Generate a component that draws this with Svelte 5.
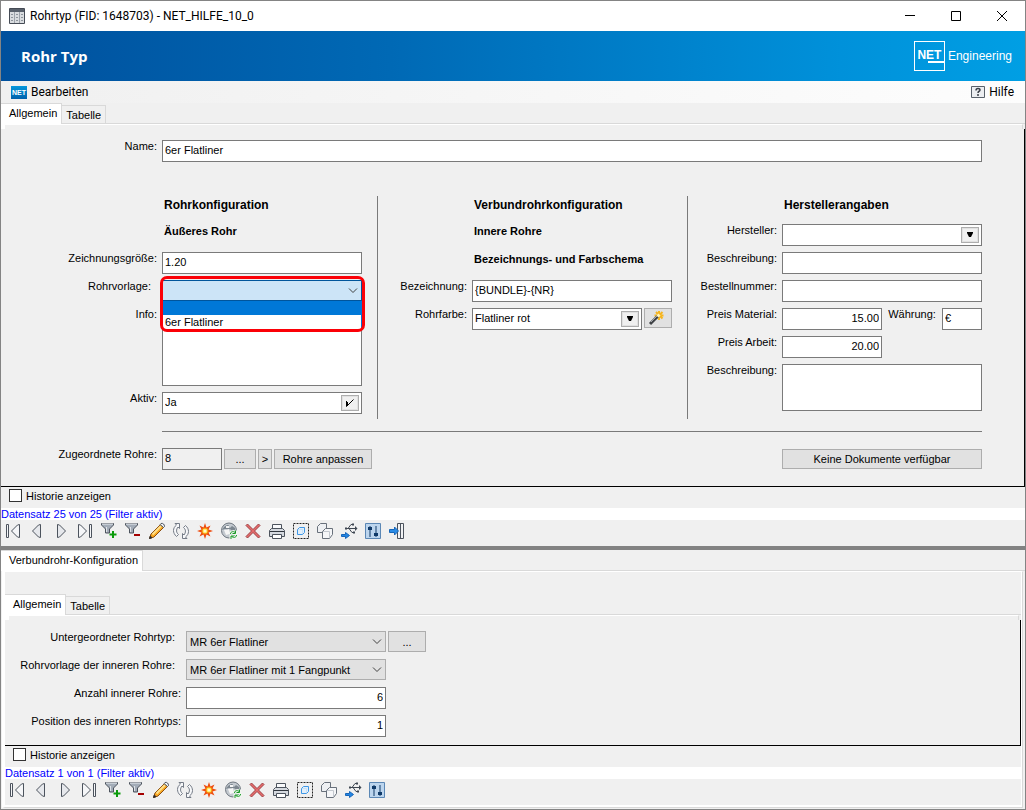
<script>
	const tools = [
		{ id: 'first', label: 'Erster Datensatz' },
		{ id: 'prev', label: 'Vorheriger Datensatz' },
		{ id: 'next', label: 'Nächster Datensatz' },
		{ id: 'last', label: 'Letzter Datensatz' },
		{ id: 'filter-add', label: 'Filter setzen' },
		{ id: 'filter-remove', label: 'Filter entfernen' },
		{ id: 'edit', label: 'Bearbeiten' },
		{ id: 'refresh', label: 'Aktualisieren' },
		{ id: 'new', label: 'Neu' },
		{ id: 'globe', label: 'Karte aktualisieren' },
		{ id: 'delete', label: 'Löschen' },
		{ id: 'print', label: 'Drucken' },
		{ id: 'select', label: 'Auswählen' },
		{ id: 'copy', label: 'Kopieren' },
		{ id: 'relation', label: 'Beziehung' },
		{ id: 'settings', label: 'Einstellungen' },
		{ id: 'exit', label: 'Schließen' }
	];

	let form = {
		name: '6er Flatliner',
		size: '1.20',
		active: 'Ja',
		count: '8',
		pattern: '{BUNDLE}-{NR}',
		color: 'Flatliner rot',
		material: '15.00',
		work: '20.00',
		currency: '€'
	};
	let inner = { count: '6', position: '1' };
</script>

<svelte:head>
	<title>Rohrtyp (FID: 1648703) - NET_HILFE_10_0</title>
</svelte:head>

{#snippet icon(name)}
	<svg width="18" height="18" viewBox="0 0 18 18" fill="none" stroke="#4c535d" aria-hidden="true">
		{#if name === 'first'}
			<path d="M2.5 2.5h2v13h-2zM15.5 2.5v13l-2 -.5l-6 -6l6 -6z" fill="#f5f6f8" />
		{:else if name === 'prev'}
			<path d="M12.5 2.5v13l-2 -.5l-6 -6l6 -6z" fill="#e6e8ec" />
		{:else if name === 'next'}
			<path d="M5.5 2.5v13l2 -.5l6 -6l-6 -6z" fill="#e6e8ec" />
		{:else if name === 'last'}
			<path d="M13.5 2.5h2v13h-2zM2.5 2.5v13l2 -.5l6 -6l-6 -6z" fill="#f5f6f8" />
		{:else if name === 'filter-add' || name === 'filter-remove'}
			<path d="M1.500 1.500h12v1.500l-4 4v4h-4v-4l-4 -4z" fill="#a3acb8" />
			<path d="M2 2h11" stroke="#e8ebef" />
			<path d="M6.500 5v5" stroke="#dfe3e8" />
			{#if name === 'filter-add'}
				<path d="M13 9v7M9.500 12.500h7" stroke="#0a9a0a" stroke-width="2" />
			{:else}
				<path d="M10 13h6" stroke="#a40000" stroke-width="2" />
			{/if}
		{:else if name === 'edit'}
			<path d="M1.500 16.500l1.500 -4.500l9.500 -9.500l3 3l-9.500 9.500z" fill="#f9a823" stroke="#8a4d12" />
			<path d="M4.500 12.500l8.500 -8.500" stroke="#ffe08a" stroke-width="2" />
			<path d="M12 2.500l1 -1q1.500 -.5 2.500 .5t1 2.500l-1 1z" fill="#eef1f5" />
			<path d="M1.500 16.500l.8 -2.500l1.700 1.700z" fill="#222" stroke="#333" />
		{:else if name === 'refresh'}
			<path
				d="M7.500 1.500h-4.500l1.500 1.500c-4 3 -4 8 0 11.500l2 -2c-2.500 -2 -2.500 -5 -.5 -7.500l1.500 1.500z"
				fill="#f6f7f9"
				stroke="#747b86"
			/>
			<path
				d="M10.500 16.500h4.500l-1.500 -1.500c4 -3 4 -8 0 -11.500l-2 2c2.500 2 2.500 5 .5 7.500l-1.500 -1.500z"
				fill="#f6f7f9"
				stroke="#747b86"
			/>
		{:else if name === 'new'}
			<path d="M9 1l1.500 4.500l4 -2l-2 4l4.500 1.500l-4.500 1.500l2 4l-4 -2l-1.500 4.500l-1.500 -4.500l-4 2l2 -4l-4.500 -1.500l4.500 -1.500l-2 -4l4 2z" fill="#ee4a0c" stroke="none" />
			<circle cx="9" cy="9" r="3" fill="#ffe24a" stroke="#f58a0b" />
			<circle cx="9" cy="9" r="1.500" fill="#fffbd0" stroke="none" />
		{:else if name === 'globe'}
			<circle cx="9" cy="8.500" r="7.500" fill="#c3c9cf" stroke="#6f7780" />
			<path d="M4 5l3 -2h2l-1 2l2 1l2 -2l3 2v3h-3l-2 -2l-2 1l-3 -1l-3 1z" fill="#7c868f" stroke="none" />
			<path d="M4 8l5 -1l1 5l-4 1zM6 4h3v2h-3z" fill="#f5f5f5" stroke="none" />
			<path d="M10.500 12c0 -3 4 -3 5 -1M15.500 8.500v3h-3M16.500 13c0 3 -4 3 -5 1M11 17v-3h3" stroke="#f0f8ef" stroke-width="3" />
			<path d="M10.500 12c0 -3 4 -3 5 -1M15.500 8.500v3h-3M16.500 13c0 3 -4 3 -5 1M11 17v-3h3" stroke="#169623" />
		{:else if name === 'delete'}
			<path
				d="M2 3.500l1.500 -1.500l5.500 5.500l5.500 -5.500l1.500 1.500l-5.500 5.500l5.500 5.500l-1.500 1.500l-5.500 -5.500l-5.500 5.500l-1.500 -1.500l5.500 -5.500z"
				fill="#e66a6a"
				stroke="#9c4145"
			/>
		{:else if name === 'print'}
			<path d="M4.500 7.500v-5h9v5" fill="#f8f9fb" />
			<path d="M3.500 6.500h11l2 2v6h-15v-6z" fill="#d5d9df" />
			<path d="M4.500 12.500h9v4h-9z" fill="#fff" />
			<path d="M2 9.500h14" stroke="#30363e" />
		{:else if name === 'select'}
			<path d="M1.500 1.500h15v15h-15z" stroke="#222" stroke-dasharray="2 1" />
			<path d="M5.500 7.500l2 -2h5v5l-2 2h-5z" fill="#e2effa" stroke="#3e97e6" />
			<path d="M6 7.500h4.500v4.500" stroke="#c5e0f8" />
		{:else if name === 'copy'}
			<path d="M1.500 4.500l3 -3h6v6l-3 3h-6z" fill="#eef0f3" stroke="#68707b" />
			<path d="M6.500 9.500l3 -3h7v6l-3 4h-7z" fill="#f5f6f8" stroke="#68707b" />
			<path d="M7 9.500h6.500v6.500" stroke="#c3c8cf" />
		{:else if name === 'relation'}
			<path d="M6 6.500h10M8 6.500l3 -4h2M9 6.500l3 4h2" stroke="#3f4752" />
			<path d="M12 1.500h2v2h-2zM13 9.500h2v2h-2zM5 5.500h2v2h-2z" fill="#3f4752" stroke="none" />
			<path d="M15 4l2.500 2.500l-2.500 2.500z" fill="#3f4752" stroke="none" />
			<path d="M1.500 12.500h4v-2l4 3l-4 3v-2h-4z" fill="#2386e4" stroke="#1866b8" />
		{:else if name === 'settings'}
			<path d="M1.500 1.500h15v15h-15z" fill="#bcd5ee" stroke="#5b87b5" />
			<path d="M6 4v11M12 4v11" stroke="#103a69" />
			<path d="M4 5h4v3h-4zM10 11h4v3h-4z" fill="#103a69" stroke="none" />
		{:else if name === 'exit'}
			<path d="M9.500 1.500h6v15h-6zM12.500 1.500v15" fill="#f1f2f4" />
			<path d="M1.500 7.500h5v-2.500l4 4l-4 4v-2.500h-5z" fill="#2b8ce6" stroke="#1866b8" />
		{/if}
	</svg>
{/snippet}

{#snippet toolbar(items)}
	<div class="toolbar" role="toolbar">
		{#each items as tool}
			<button type="button" aria-label={tool.label}>{@render icon(tool.id)}</button>
		{/each}
	</div>
{/snippet}

{#snippet chevron()}
	<svg class="chevron" width="10" height="6" viewBox="0 0 10 6" fill="none" stroke="#404040" aria-hidden="true">
		<path d="M1 .5l4 4l4 -4" />
	</svg>
{/snippet}

{#snippet arrow()}
	<svg width="8" height="6" viewBox="0 0 8 6" aria-hidden="true"><path d="M1 0h6v1l-2 4h-2l-2 -4z" /></svg>
{/snippet}

<div class="window">
	<div class="titlebar">
		<svg width="16" height="16" viewBox="0 0 16 16" aria-hidden="true">
			<path d="M.5 .5h15v15h-15z" fill="#d9dcdf" stroke="#454b55" />
			<path d="M1 1h14v3h-14z" fill="#59616c" />
			<path d="M5.500 4v11M10.500 4v11" stroke="#9da3ab" />
			<path d="M2 6.500h2M2 9.500h2M2 12.500h2M7 6.500h2M7 9.500h2M7 12.500h2M12 6.500h2M12 9.500h2M12 12.500h2" stroke="#8e959d" />
		</svg>
		<span class="caption">Rohrtyp (FID: 1648703) - NET_HILFE_10_0</span>
		<button type="button" aria-label="Minimieren">
			<svg width="10" height="10" viewBox="0 0 10 10" stroke="#000"><path d="M0 4.500h10" /></svg>
		</button>
		<button type="button" aria-label="Maximieren">
			<svg width="10" height="10" viewBox="0 0 10 10" fill="none" stroke="#000"><path d="M.5 .5h9v9h-9z" /></svg>
		</button>
		<button type="button" aria-label="Fenster schließen">
			<svg width="10" height="10" viewBox="0 0 10 10" stroke="#000"><path d="M0 0l10 10M10 0l-10 10" /></svg>
		</button>
	</div>

	<header>
		<h1>Rohr Typ</h1>
		<div class="brand"><span class="brand-box">NET</span>Engineering</div>
	</header>

	<nav class="menu">
		<button type="button"><span class="net">NET</span>Bearbeiten</button>
		<button type="button">
			<svg width="14" height="12" viewBox="0 0 14 12" fill="none" aria-hidden="true">
				<path d="M.5 .5h13v11h-13z" fill="#eceef1" stroke="#59616b" />
				<path d="M5 4.500c0 -3 4 -2.500 4 -.5c0 1.500 -2 1 -2 3M7 8v2" stroke="#3b4048" stroke-width="1.500" />
			</svg>Hilfe
		</button>
	</nav>

	<div class="tabs" role="tablist">
		<button type="button" role="tab" aria-selected="true">Allgemein</button>
		<button type="button" role="tab" aria-selected="false">Tabelle</button>
	</div>
	<div class="frame-top"></div>
	<form class="panel main">
		<div class="row wide">
			<label for="name">Name:</label>
			<input id="name" type="text" bind:value={form.name} />
		</div>
		<div class="sections">
			<section class="wide">
				<div class="row"><h2>Rohrkonfiguration</h2></div>
				<div class="row"><h3>Äußeres Rohr</h3></div>
				<div class="row">
					<label for="size">Zeichnungsgröße:</label>
					<input id="size" type="text" bind:value={form.size} />
				</div>
				<div class="row">
					<label class="inset" for="template">Rohrvorlage:</label>
					<div class="dropdown open">
						<select id="template"><option></option><option>6er Flatliner</option></select>
						{@render chevron()}
						<ul class="options">
							<li class="active"></li>
							<li>6er Flatliner</li>
						</ul>
						<div class="marker"></div>
					</div>
				</div>
				<div class="row">
					<label for="info">Info:</label>
					<textarea id="info" class="tall"></textarea>
				</div>
				<div class="row">
					<label for="active">Aktiv:</label>
					<div class="combo">
						<input id="active" type="text" bind:value={form.active} />
						<button type="button" aria-label="Aktiv umschalten">
							<svg width="10" height="10" viewBox="0 0 10 10" fill="none" stroke="#000">
								<path d="M1.500 3v5.500l7 -7M2.500 4v3" />
							</svg>
						</button>
					</div>
				</div>
			</section>

			<section>
				<div class="row"><h2>Verbundrohrkonfiguration</h2></div>
				<div class="row"><h3>Innere Rohre</h3></div>
				<div class="row"><h3>Bezeichnungs- und Farbschema</h3></div>
				<div class="row">
					<label for="pattern">Bezeichnung:</label>
					<input id="pattern" type="text" bind:value={form.pattern} />
				</div>
				<div class="row">
					<label for="color">Rohrfarbe:</label>
					<div class="group">
						<div class="combo">
							<input id="color" type="text" bind:value={form.color} />
							<button type="button" aria-label="Rohrfarbe wählen">{@render arrow()}</button>
						</div>
						<button class="button wand" type="button" aria-label="Farbassistent">
							<svg width="18" height="18" viewBox="0 0 18 18" fill="none" aria-hidden="true">
								<path d="M11 2v9M6.500 6.500h9M8 3l6.500 6.500M14.500 3l-6.500 6.500" stroke="#f6b51e" stroke-width="2" />
								<path d="M2 15l8 -8" stroke="#3f4246" stroke-width="3" />
								<path d="M3 13l6 -6" stroke="#a5a9ae" />
								<path d="M9.500 7.500l2 -2" stroke="#fff4bb" stroke-width="3" />
							</svg>
						</button>
					</div>
				</div>
			</section>

			<section>
				<div class="row"><h2>Herstellerangaben</h2></div>
				<div class="row">
					<label for="vendor">Hersteller:</label>
					<div class="combo">
						<input id="vendor" type="text" />
						<button type="button" aria-label="Hersteller wählen">{@render arrow()}</button>
					</div>
				</div>
				<div class="row">
					<label for="vendor-text">Beschreibung:</label>
					<input id="vendor-text" type="text" />
				</div>
				<div class="row">
					<label for="order">Bestellnummer:</label>
					<input id="order" type="text" />
				</div>
				<div class="row">
					<label for="material">Preis Material:</label>
					<div class="group price">
						<input id="material" class="number" type="text" bind:value={form.material} />
						<label for="currency">Währung:</label>
						<input id="currency" class="currency" type="text" bind:value={form.currency} />
					</div>
				</div>
				<div class="row">
					<label for="work">Preis Arbeit:</label>
					<input id="work" class="number half" type="text" bind:value={form.work} />
				</div>
				<div class="row">
					<label for="note">Beschreibung:</label>
					<textarea id="note"></textarea>
				</div>
			</section>
		</div>
		<hr />
		<div class="row wide">
			<label for="count">Zugeordnete Rohre:</label>
			<div class="group actions">
				<input id="count" class="count" type="text" readonly value={form.count} />
				<button class="button more" type="button">...</button>
				<button class="button arrow" type="button">&gt;</button>
				<button class="button adjust" type="button">Rohre anpassen</button>
				<button class="button documents" type="button">Keine Dokumente verfügbar</button>
			</div>
		</div>
	</form>
	<label class="history"><input type="checkbox" />Historie anzeigen</label>
	<div class="status">Datensatz 25 von 25 (Filter aktiv)</div>
	{@render toolbar(tools)}

	<div class="splitter"></div>

	<div class="tabs" role="tablist">
		<button type="button" role="tab" aria-selected="true">Verbundrohr-Konfiguration</button>
	</div>
	<div class="subframe">
		<div class="tabs" role="tablist">
			<button type="button" role="tab" aria-selected="true">Allgemein</button>
			<button type="button" role="tab" aria-selected="false">Tabelle</button>
		</div>
		<div class="frame-top"></div>
		<form class="panel sub">
			<div class="row">
				<label class="inset" for="child">Untergeordneter Rohrtyp:</label>
				<div class="group">
					<div class="dropdown">
						<select id="child"><option>MR 6er Flatliner</option></select>
						{@render chevron()}
					</div>
					<button class="button lookup" type="button">...</button>
				</div>
			</div>
			<div class="row">
				<label class="inset" for="child-template">Rohrvorlage der inneren Rohre:</label>
				<div class="dropdown">
					<select id="child-template"><option>MR 6er Flatliner mit 1 Fangpunkt</option></select>
					{@render chevron()}
				</div>
			</div>
			<div class="row">
				<label for="inner-count">Anzahl innerer Rohre:</label>
				<input id="inner-count" class="number" type="text" bind:value={inner.count} />
			</div>
			<div class="row">
				<label for="inner-position">Position des inneren Rohrtyps:</label>
				<input id="inner-position" class="number" type="text" bind:value={inner.position} />
			</div>
		</form>
		<label class="history"><input type="checkbox" />Historie anzeigen</label>
		<div class="status">Datensatz 1 von 1 (Filter aktiv)</div>
		{@render toolbar(tools.slice(0, -1))}
	</div>
</div>

<style>
	:global(body) {
		margin: 0;
		background: #f0f0f0;
	}
	.window,
	.window * {
		box-sizing: border-box;
	}
	.window {
		min-height: 100vh;
		border: 1px solid #848484;
		background: #f0f0f0;
		color: #000;
		font-family: 'Liberation Sans', Arial, sans-serif;
		font-size: 11px;
		line-height: 12px;
	}
	button,
	input,
	select,
	textarea {
		margin: 0;
		font: inherit;
		color: inherit;
		border-radius: 0;
		outline: none;
	}
	button {
		padding: 0;
		border: 0;
		background: none;
	}
	svg {
		display: block;
		flex-shrink: 0;
	}
	.titlebar {
		display: flex;
		align-items: center;
		height: 30px;
		padding-left: 8px;
		background: #fff;
		font-family: Roboto, 'Noto Sans', sans-serif;
		font-size: 12px;
		line-height: 16px;
	}
	.caption {
		flex: 1;
		padding-left: 5px;
	}
	.titlebar button {
		display: flex;
		align-items: center;
		justify-content: center;
		width: 46px;
		height: 30px;
	}
	header {
		display: flex;
		align-items: center;
		justify-content: space-between;
		height: 50px;
		padding: 0 13px 0 20px;
		color: #fff;
		background: linear-gradient(90deg, #00509d, #0069b5 38%, #0091da 82%, #009fe4);
	}
	h1 {
		margin: 0;
		font: bold 15px/20px 'Open Sans', 'Noto Sans', sans-serif;
	}
	.brand {
		display: flex;
		align-items: center;
		gap: 3px;
		font-size: 12px;
	}
	.brand-box {
		display: flex;
		flex-direction: column;
		justify-content: center;
		align-items: center;
		width: 31px;
		height: 30px;
		border: 1px solid #fff;
		font-size: 12px;
		font-weight: bold;
	}
	.brand-box::after {
		content: '';
		align-self: flex-end;
		width: 16px;
		height: 2px;
		background: #fff;
	}
	.menu {
		display: flex;
		justify-content: space-between;
		height: 22px;
		padding: 0 11px 0 10px;
		background: linear-gradient(90deg, #f0f0f0, #fdfdfd);
		font-family: Roboto, 'Noto Sans', sans-serif;
		font-size: 12px;
		line-height: 16px;
	}
	.menu button {
		display: flex;
		align-items: center;
		gap: 4px;
	}
	.net {
		width: 16px;
		height: 13px;
		background: linear-gradient(180deg, #0497dc, #0061ab);
		color: #fff;
		font: bold 7px/13px 'Liberation Sans', Arial, sans-serif;
		text-align: center;
	}
	.tabs {
		display: flex;
		align-items: flex-end;
		height: 21px;
		padding-right: 2px;
		background: linear-gradient(#d9d9d9, #d9d9d9) bottom / 100% 1px no-repeat;
	}
	.tabs button {
		height: 19px;
		padding: 0 4px;
		border: 1px solid #d9d9d9;
		border-left: 0;
		background: #f0f0f0;
	}
	.tabs button[aria-selected='true'] {
		height: 21px;
		padding: 0 4px 2px 8px;
		border-bottom: 0;
		background: #fff;
	}
	.frame-top {
		height: 5px;
		margin: 0 2px 0 0;
		border: 1px solid #d9d9d9;
		border-width: 1px 1px 0 4px;
		border-color: #fff #d9d9d9 #fff #fff;
	}
	.panel {
		border-right: 1px solid #000;
		border-bottom: 1px solid #000;
	}
	.main {
		padding: 11px 42px 16px 0;
	}
	.row {
		display: grid;
		grid-template-columns: 89px minmax(0, 1fr);
		column-gap: 5px;
		align-items: start;
		min-height: 22px;
	}
	.wide.row,
	.wide .row {
		grid-template-columns: 156px minmax(0, 1fr);
	}
	.row label {
		text-align: right;
		white-space: nowrap;
	}
	.row label.inset {
		padding-right: 6px;
	}
	.row h2,
	.row h3 {
		grid-column: 2;
		margin: 0;
		padding-left: 2px;
		white-space: nowrap;
	}
	h2 {
		font-size: 12px;
		line-height: 18px;
	}
	h3 {
		font-size: 11px;
		line-height: 14px;
	}
	.row input,
	.combo,
	textarea {
		display: block;
		width: 100%;
		height: 22px;
		padding: 0 2px 3px;
		border: 1px solid #7a7a7a;
		background: #fff;
	}
	textarea {
		height: 47px;
		resize: none;
	}
	textarea.tall {
		height: 78px;
	}
	.sections {
		display: grid;
		grid-template-columns: 377fr 310fr 294fr;
		margin-top: 34px;
	}
	section {
		display: flex;
		flex-direction: column;
		gap: 6px;
		padding: 0 15px 5px 0;
		border-right: 1px solid #7a7a7a;
	}
	section:last-child {
		padding-right: 0;
		border-right: 0;
	}
	.combo {
		display: flex;
		align-items: center;
		padding: 0 2px 0 0;
	}
	.row .combo input {
		flex: 1;
		min-width: 0;
		height: 20px;
		border: 0;
		background: none;
	}
	.combo button {
		display: flex;
		align-items: center;
		justify-content: center;
		width: 18px;
		height: 16px;
		border: 1px solid #adadad;
		background: #f0f0f0;
		box-shadow: inset 0 0 0 1px #e1e1e1;
	}
	.group {
		display: flex;
		gap: 2px;
	}
	.dropdown {
		position: relative;
		width: 100%;
	}
	select {
		display: block;
		width: 100%;
		height: 21px;
		padding: 0 20px 0 3px;
		border: 1px solid #adadad;
		background: #e1e1e1;
		appearance: none;
	}
	.chevron {
		position: absolute;
		top: 8px;
		right: 4px;
		pointer-events: none;
	}
	.open select {
		border-color: #00559b;
		background: #cce4f7;
	}
	.options {
		position: absolute;
		z-index: 1;
		top: 21px;
		left: 0;
		right: 0;
		margin: 0;
		padding: 0;
		border: 1px solid #0078d7;
		border-top: 0;
		background: #fff;
		list-style: none;
	}
	.options li {
		height: 14px;
		padding-left: 2px;
		line-height: 14px;
	}
	.options .active {
		background: #0078d7;
	}
	.marker {
		position: absolute;
		z-index: 2;
		inset: -4px -3px -31px -2px;
		border: 3px solid #fb0007;
		border-radius: 7px;
		pointer-events: none;
	}
	.button {
		height: 20px;
		border: 1px solid #adadad;
		background: #e1e1e1;
		white-space: nowrap;
	}
	.wand {
		display: flex;
		align-items: center;
		width: 28px;
		padding-left: 3px;
		flex-shrink: 0;
	}
	.row .number {
		text-align: right;
	}
	.row .half {
		width: 100px;
	}
	.price {
		justify-content: space-between;
	}
	.price .number {
		width: 100px;
	}
	.row .currency {
		width: 40px;
	}
	.actions {
		align-items: center;
	}
	.row .count {
		width: 60px;
		background: #f0f0f0;
	}
	.more {
		width: 32px;
	}
	.arrow {
		width: 14px;
	}
	.adjust {
		width: 98px;
	}
	.documents {
		width: 200px;
		margin-left: auto;
	}
	hr {
		height: 1px;
		margin: 12px 0 16px 161px;
		border: 0;
		background: #7a7a7a;
	}
	.history {
		display: flex;
		align-items: center;
		gap: 4px;
		height: 21px;
		padding: 0 0 4px 8px;
	}
	.history input {
		width: 13px;
		height: 13px;
		border: 1px solid #333;
		background: #fff;
		appearance: none;
	}
	.status {
		height: 12px;
		background: #fff;
		color: #00f;
	}
	.toolbar {
		display: flex;
		height: 26px;
	}
	.toolbar button {
		display: flex;
		align-items: center;
		justify-content: center;
		width: 24px;
		height: 22px;
	}
	.splitter {
		height: 4px;
		background: #828282;
	}
	.subframe {
		margin: 0 2px 1px 1px;
		padding: 22px 1px 2px 0;
		border: 1px solid #d9d9d9;
		border-top-color: #fff;
		border-left: 3px solid #fff;
		box-shadow: inset -1px -2px #fff;
	}
	.sub {
		display: flex;
		flex-direction: column;
		gap: 6px;
		padding: 11px 0 8px;
	}
	.sub .row {
		grid-template-columns: 176px 200px;
	}
	.sub .dropdown {
		width: 200px;
		flex-shrink: 0;
	}
	.lookup {
		width: 38px;
		height: 21px;
		flex-shrink: 0;
	}
</style>
